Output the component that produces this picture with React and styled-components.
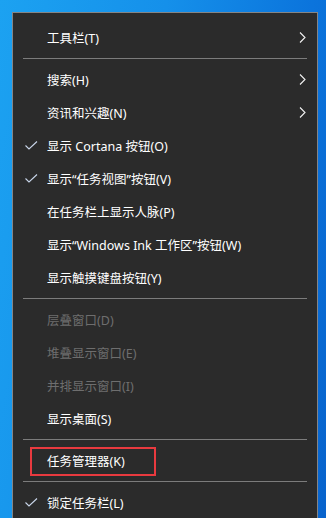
import styled, { createGlobalStyle } from "styled-components";

const Global = createGlobalStyle`
  html, body {
    margin: 0;
    padding: 0;
  }
  body {
    width: 326px;
    height: 518px;
    overflow: hidden;
    background: linear-gradient(100deg, #1ca2f1 0%, #1590ea 40%, #0b74dc 75%, #0863cc 100%);
    font-family: "Noto Sans", "Noto Sans CJK SC", sans-serif;
  }
`;

const Desktop = styled.div`
  padding: 12px 8px 0 12px;
`;

const Menu = styled.ul`
  list-style: none;
  margin: 0;
  width: 306px;
  box-sizing: border-box;
  padding: 8px 0;
  background: #2b2b2b;
  border: 1px solid #858585;
`;

const Item = styled.li`
  position: relative;
  display: flex;
  align-items: center;
  height: 33px;
  font-size: 12.5px;
  color: ${(p) => (p.disabled ? "#6e6e6e" : "#ffffff")};
`;

const Mark = styled.span`
  width: 34px;
  flex: none;
  display: flex;
  align-items: center;
  padding-left: 12px;
  box-sizing: border-box;
`;

const Label = styled.span`
  flex: 1;
  white-space: nowrap;
`;

const Arrow = styled.span`
  flex: none;
  display: flex;
  margin-right: 11px;
`;

const Separator = styled.li`
  height: 9px;
  display: flex;
  align-items: center;
  padding: 0 10px 0 10px;

  &::after {
    content: "";
    flex: 1;
    height: 1px;
    background: #7c7c7c;
  }
`;

const Highlight = styled.span`
  position: absolute;
  left: 17px;
  top: 3px;
  width: 126px;
  height: 29px;
  box-sizing: border-box;
  border: 2px solid #e93a3f;
  pointer-events: none;
`;

function Check() {
  return (
    <svg width="13" height="9" viewBox="0 0 13 9">
      <path d="M0.5 4.5 L4 8 L12 0.5" fill="none" stroke="#c9d6ea" strokeWidth="1.1" />
    </svg>
  );
}

function Chevron() {
  return (
    <svg width="7" height="11" viewBox="0 0 7 11">
      <path d="M1 0.5 L6 5.5 L1 10.5" fill="none" stroke="#f2f2f2" strokeWidth="1.1" />
    </svg>
  );
}

const rows = [
  { label: "工具栏(T)", sub: true },
  "sep",
  { label: "搜索(H)", sub: true },
  { label: "资讯和兴趣(N)", sub: true },
  { label: "显示 Cortana 按钮(O)", checked: true },
  { label: "显示“任务视图”按钮(V)", checked: true },
  { label: "在任务栏上显示人脉(P)" },
  { label: "显示“Windows Ink 工作区”按钮(W)" },
  { label: "显示触摸键盘按钮(Y)" },
  "sep",
  { label: "层叠窗口(D)", disabled: true },
  { label: "堆叠显示窗口(E)", disabled: true },
  { label: "并排显示窗口(I)", disabled: true },
  { label: "显示桌面(S)" },
  "sep",
  { label: "任务管理器(K)", marked: true },
  "sep",
  { label: "锁定任务栏(L)", checked: true },
];

export default function App() {
  return (
    <Desktop>
      <Global />
      <Menu>
        {rows.map((r, i) =>
          r === "sep" ? (
            <Separator key={i} />
          ) : (
            <Item key={i} disabled={r.disabled}>
              <Mark>{r.checked && <Check />}</Mark>
              <Label>{r.label}</Label>
              {r.sub && (
                <Arrow>
                  <Chevron />
                </Arrow>
              )}
              {r.marked && <Highlight />}
            </Item>
          )
        )}
      </Menu>
    </Desktop>
  );
}
